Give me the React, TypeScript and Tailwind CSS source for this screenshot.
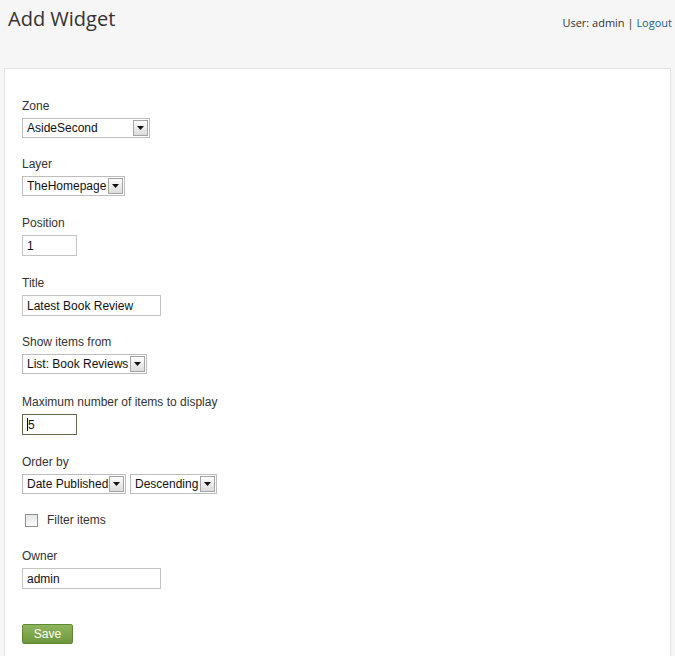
import React from 'react';

const Arrow: React.FC = () => (
    <span className="ml-auto mr-[1px] flex h-[16px] w-[15px] shrink-0 items-center justify-center border border-[#a4a4a4] bg-gradient-to-b from-[#fdfdfd] to-[#dcdcdc]">
        <svg width="7" height="4" viewBox="0 0 7 4">
            <path d="M0 0h7L3.5 4z" fill="#111" />
        </svg>
    </span>
);

interface SelectProps {
    value: string;
    width: string;
}

const Select: React.FC<SelectProps> = ({ value, width }) => (
    <div className={`flex h-[20px] items-center border border-[#bdbdbd] bg-white pl-[4px] text-[12px] text-[#111] ${width}`}>
        <span className="whitespace-nowrap leading-none">{value}</span>
        <Arrow />
    </div>
);

interface InputProps {
    value: string;
    width: string;
    focused?: boolean;
}

const Input: React.FC<InputProps> = ({ value, width, focused }) => (
    <div
        className={`flex h-[21px] items-center border bg-white pl-[4px] text-[12px] text-[#111] ${width} ${
            focused ? 'border-[#5d6b4a]' : 'border-[#c4c4c4]'
        }`}
    >
        {focused && <span className="h-[13px] w-px bg-black" />}
        <span className="leading-none">{value}</span>
    </div>
);

const Label: React.FC<{ children: React.ReactNode }> = ({ children }) => (
    <div className="mb-[4px] pt-[1px] text-[12px] leading-[15px] text-[#333]">{children}</div>
);

const App: React.FC = () => {
    return (
        <div className="h-[656px] overflow-hidden bg-[#f6f6f6] font-['Open_Sans',sans-serif]">
            <div className="flex items-start justify-between px-[8px] pt-[4px]">
                <h1 className="text-[20px] leading-[30px] text-[#333]">Add Widget</h1>
                <div className="mt-[11px] mr-[-5px] text-[11px] text-[#333]">
                    User: admin | <span className="text-[#1f5c8c]">Logout</span>
                </div>
            </div>

            <div className="ml-[4px] mr-[4px] mt-[34px] h-[700px] border border-[#e4e4e4] bg-white px-[17px] pt-[29px]">
                <div className="font-['Liberation_Sans',Arial,sans-serif]">
                    <div className="mb-[18px]">
                        <Label>Zone</Label>
                        <Select value="AsideSecond" width="w-[128px]" />
                    </div>
                    <div className="mb-[19px]">
                        <Label>Layer</Label>
                        <Select value="TheHomepage" width="w-[103px]" />
                    </div>
                    <div className="mb-[19px]">
                        <Label>Position</Label>
                        <Input value="1" width="w-[55px]" />
                    </div>
                    <div className="mb-[18px]">
                        <Label>Title</Label>
                        <Input value="Latest Book Review" width="w-[139px]" />
                    </div>
                    <div className="mb-[20px]">
                        <Label>Show items from</Label>
                        <Select value="List: Book Reviews" width="w-[125px]" />
                    </div>
                    <div className="mb-[19px]">
                        <Label>Maximum number of items to display</Label>
                        <Input value="5" width="w-[55px]" focused />
                    </div>
                    <div className="mb-[18px]">
                        <Label>Order by</Label>
                        <div className="flex gap-[4px]">
                            <Select value="Date Published" width="w-[104px]" />
                            <Select value="Descending" width="w-[87px]" />
                        </div>
                    </div>
                    <div className="mb-[20px] flex h-[16px] items-center pl-[3px]">
                        <span className="h-[13px] w-[13px] border border-[#8f8f8f] bg-gradient-to-b from-[#e6e6e6] to-[#fbfbfb]" />
                        <span className="ml-[9px] text-[12px] text-[#333]">Filter items</span>
                    </div>
                    <div className="mb-[32px]">
                        <Label>Owner</Label>
                        <Input value="admin" width="w-[139px]" />
                    </div>
                    <button className="h-[20px] w-[51px] rounded-[2px] border border-[#5e8a33] bg-gradient-to-b from-[#8fb55c] to-[#6e983d] text-[12px] leading-none text-white">
                        Save
                    </button>
                </div>
            </div>
        </div>
    );
};

export default App;
